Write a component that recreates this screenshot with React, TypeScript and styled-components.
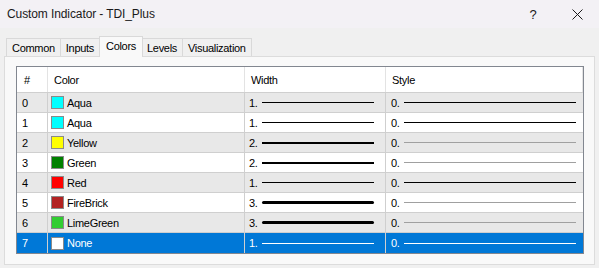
import styled, { createGlobalStyle } from 'styled-components';

const GlobalStyle = createGlobalStyle`
  html, body {
    margin: 0;
    padding: 0;
    background: #f0f0f0;
  }
  body {
    font-family: "Liberation Sans", Arial, sans-serif;
    color: #000;
  }
`

const Window = styled.div`
  width: 599px;
  height: 268px;
  display: flex;
  flex-direction: column;
  background: #f0f0f0;
  overflow: hidden;
`

const TitleBar = styled.div`
  height: 28px;
  flex: none;
  display: flex;
  align-items: center;
  justify-content: space-between;
  background: #f3f1f5;
  padding-left: 7px;
`

const Title = styled.span`
  font-size: 12px;
  letter-spacing: -0.1px;
  color: #1a1a1a;
`

const Caption = styled.div`
  display: flex;
  height: 100%;
`

const CaptionButton = styled.div`
  width: 44px;
  height: 100%;
  display: flex;
  align-items: center;
  justify-content: center;
  font-size: 13px;
  color: #1a1a1a;
`

const Content = styled.div`
  flex: 1;
  display: flex;
  flex-direction: column;
  padding: 8px 4px 3px 4px;
`

const TabStrip = styled.div`
  display: flex;
  align-items: flex-start;
  height: 21px;
  padding-left: 2px;
  margin-bottom: -1px;
  position: relative;
  z-index: 1;
`

const Tab = styled.div<{ active?: boolean }>`
  box-sizing: border-box;
  height: ${p => (p.active ? '21px' : '18px')};
  margin-top: ${p => (p.active ? '0' : '2px')};
  margin-left: -1px;
  margin-right: ${p => (p.active ? '-1px' : '0')};
  padding: ${p => (p.active ? '0 6px 2px' : '0 5px')};
  border: 1px solid #d9d9d9;
  border-bottom: none;
  background: ${p => (p.active ? '#f9f9f9' : '#f0f0f0')};
  position: relative;
  z-index: ${p => (p.active ? 2 : 1)};
  display: flex;
  align-items: center;
  font-size: 11px;
  letter-spacing: -0.3px;
  &:first-child {
    margin-left: 0;
  }
`

const Panel = styled.div`
  flex: 1;
  background: #f9f9f9;
  border: 1px solid #dcdcdc;
  padding: 9px 10px 10px 11px;
`

const Table = styled.div`
  border: 1px solid #828790;
  background: #fff;
  font-size: 11px;
  letter-spacing: -0.3px;
`

const Row = styled.div<{ tone: 'head' | 'gray' | 'white' | 'selected' }>`
  display: grid;
  grid-template-columns: 31px 197px 141px 1fr;
  height: ${p => (p.tone === 'head' ? '26px' : '20px')};
  box-sizing: border-box;
  border-bottom: ${p => (p.tone === 'selected' ? 'none' : '1px solid #cfcfcf')};
  background: ${p =>
    p.tone === 'gray' ? '#e8e8e8' : p.tone === 'selected' ? '#0078d7' : '#fff'};
  color: ${p => (p.tone === 'selected' ? '#fff' : '#000')};
`

const Cell = styled.div<{ pad?: number; head?: boolean }>`
  display: flex;
  align-items: center;
  padding-left: ${p => p.pad ?? 5}px;
  border-right: 1px solid ${p => (p.head ? '#e3e3e3' : '#cfcfcf')};
  overflow: hidden;
  white-space: nowrap;
  &:last-child {
    border-right: ${p => (p.head ? '1px solid #e3e3e3' : 'none')};
  }
`

const Swatch = styled.span<{ fill: string }>`
  width: 13px;
  height: 13px;
  box-sizing: border-box;
  border: 1px solid #8a8a8a;
  background: ${p => p.fill};
  margin-right: 3px;
  flex: none;
`

const Num = styled.span`
  width: 13px;
  flex: none;
`

const Stroke = styled.span<{ size: number; tint: string; end: number }>`
  flex: 1;
  height: ${p => p.size}px;
  background: ${p => p.tint};
  border-radius: ${p => (p.size >= 3 ? '2px' : '0')};
  margin-right: ${p => p.end}px;
`

interface Buffer {
  name: string
  fill: string
  width: number
}

const buffers: Buffer[] = [
  { name: 'Aqua', fill: '#00ffff', width: 1 },
  { name: 'Aqua', fill: '#00ffff', width: 1 },
  { name: 'Yellow', fill: '#ffff00', width: 2 },
  { name: 'Green', fill: '#008000', width: 2 },
  { name: 'Red', fill: '#ff0000', width: 1 },
  { name: 'FireBrick', fill: '#b22222', width: 3 },
  { name: 'LimeGreen', fill: '#32cd32', width: 3 },
  { name: 'None', fill: '#ffffff', width: 1 },
]

const CloseIcon = () => (
  <svg width="11" height="11" viewBox="0 0 11 11">
    <path d="M0.5 0.5 L10.5 10.5 M10.5 0.5 L0.5 10.5" stroke="#1a1a1a" strokeWidth="1" fill="none" />
  </svg>
)

const tabs = ['Common', 'Inputs', 'Colors', 'Levels', 'Visualization']

const App = () => {
  return (
    <Window>
      <GlobalStyle />
      <TitleBar>
        <Title>Custom Indicator - TDI_Plus</Title>
        <Caption>
          <CaptionButton>?</CaptionButton>
          <CaptionButton>
            <CloseIcon />
          </CaptionButton>
        </Caption>
      </TitleBar>

      <Content>
        <TabStrip>
          {tabs.map(t => (
            <Tab key={t} active={t === 'Colors'}>{t}</Tab>
          ))}
        </TabStrip>
        <Panel>
          <Table>
            <Row tone="head">
              <Cell head pad={7}>#</Cell>
              <Cell head pad={6}>Color</Cell>
              <Cell head pad={6}>Width</Cell>
              <Cell head pad={6}>Style</Cell>
            </Row>
            {buffers.map((b, i) => {
              const selected = i === buffers.length - 1
              const tone = selected ? 'selected' : i % 2 === 0 ? 'gray' : 'white'
              const ink = selected ? '#fff' : '#000'
              const styleInk = selected ? '#fff' : b.width > 1 ? '#a0a0a0' : '#000'
              return (
                <Row key={i} tone={tone}>
                  <Cell pad={5}>{i}</Cell>
                  <Cell pad={3}>
                    <Swatch fill={b.fill} />
                    {b.name}
                  </Cell>
                  <Cell pad={4}>
                    <Num>{b.width}.</Num>
                    <Stroke size={b.width} tint={ink} end={11} />
                  </Cell>
                  <Cell pad={5}>
                    <Num>0.</Num>
                    <Stroke size={1} tint={styleInk} end={7} />
                  </Cell>
                </Row>
              )
            })}
          </Table>
        </Panel>
      </Content>
    </Window>
  )
}

export default App;
